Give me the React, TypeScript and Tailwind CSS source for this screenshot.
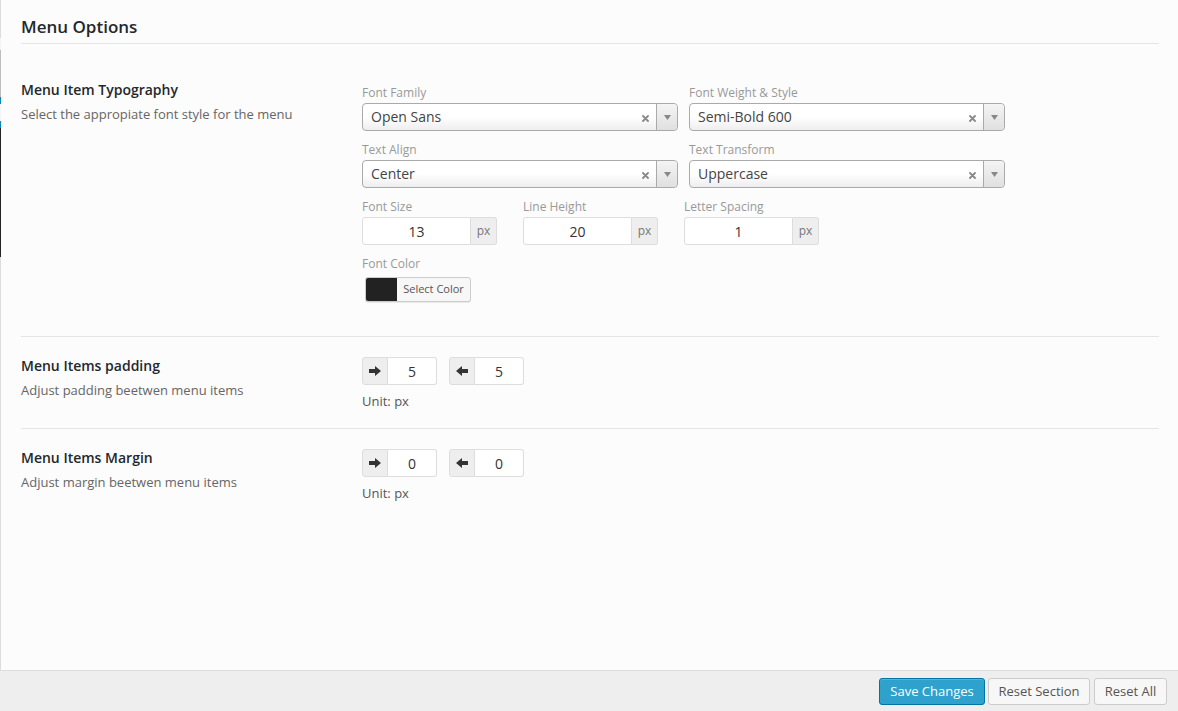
import React from "react";

const strip = [
  { h: 38, c: "bg-[#dcdcdc]" },
  { h: 12, c: "bg-[#f4f4f4]" },
  { h: 47, c: "bg-[#bdbdbd]" },
  { h: 7, c: "bg-[#0b86b8]" },
  { h: 17, c: "bg-[#f4f4f4]" },
  { h: 7, c: "bg-[#0b86b8]" },
  { h: 129, c: "bg-[#222222]" },
];

const SelectBox = ({ value }: { value: string }) => (
  <div className="flex h-[28px] w-[316px] items-center rounded-[4px] border border-[#aaaaaa] bg-gradient-to-b from-white from-50% to-[#eeeeee] text-[14px] text-[#444]">
    <span className="flex-1 pl-[8px] leading-[26px]">{value}</span>
    <svg width="7" height="7" viewBox="0 0 7 7" className="mr-[7px] mt-[2px]">
      <path d="M1 1l5 5M6 1L1 6" stroke="#888" strokeWidth="1.8" strokeLinecap="round" />
    </svg>
    <span className="flex h-full w-[21px] items-center justify-center rounded-r-[4px] border-l border-[#aaaaaa] bg-gradient-to-b from-[#f4f4f4] to-[#e0e0e0]">
      <svg width="7" height="5" viewBox="0 0 7 5">
        <path d="M0 0h7L3.5 5z" fill="#888" />
      </svg>
    </span>
  </div>
);

const NumberInput = ({ value }: { value: string }) => (
  <div className="flex h-[28px] w-[135px]">
    <div className="flex w-[109px] items-center justify-center rounded-l-[3px] border border-[#dddddd] bg-white text-[14px] text-[#333]">
      {value}
    </div>
    <div className="flex w-[26px] items-center justify-center rounded-r-[3px] border border-l-0 border-[#dddddd] bg-[#eeeeee] text-[12px] text-[#777]">
      px
    </div>
  </div>
);

const Arrow = ({ dir }: { dir: "right" | "left" }) => (
  <svg width="12" height="10" viewBox="0 0 12 10" className={dir === "left" ? "-scale-x-100" : ""}>
    <path d="M0 3h6V0l6 5-6 5V7H0z" fill="#333" />
  </svg>
);

const SpacingInput = ({ dir, value }: { dir: "right" | "left"; value: string }) => (
  <div className="flex h-[28px] w-[75px]">
    <div className="flex w-[26px] items-center justify-center rounded-l-[3px] border border-[#dddddd] bg-[#eeeeee]">
      <Arrow dir={dir} />
    </div>
    <div className="flex w-[49px] items-center justify-center rounded-r-[3px] border border-l-0 border-[#dddddd] bg-white text-[14px] text-[#333]">
      {value}
    </div>
  </div>
);

const Label = ({ children }: { children: React.ReactNode }) => (
  <div className="text-[12px] leading-[18px] text-[#999]">{children}</div>
);

const SectionInfo = ({ title, desc }: { title: string; desc: string }) => (
  <div className="w-[341px] shrink-0">
    <div className="text-[14px] font-semibold leading-[20px] text-[#23282d]">{title}</div>
    <div className="mt-[4px] text-[13px] leading-[20px] text-[#666]">{desc}</div>
  </div>
);

const App = () => {
  return (
    <div className="flex h-[711px] w-[1178px] flex-col overflow-hidden bg-[#eeeeee] font-['Open_Sans',sans-serif]">
      <div className="flex h-[671px] border-b border-[#dddddd] bg-[#fcfcfc]">
        <div className="flex w-px flex-col bg-[#dddddd]">
          {strip.map((s, i) => (
            <div key={i} className={s.c} style={{ height: s.h }} />
          ))}
        </div>
        <div className="flex-1 px-[20px] pr-[19px]">
          <div className="border-b border-[#e5e5e5] pb-[6px] pt-[16px] text-[17px] font-semibold leading-[21px] text-[#23282d]">
            Menu Options
          </div>

          {/* typography */}
          <div className="flex border-b border-[#e5e5e5] pb-[34px] pt-[36px]">
            <SectionInfo title="Menu Item Typography" desc="Select the appropiate font style for the menu" />
            <div className="pt-[4px]">
              <div className="flex gap-[11px]">
                <div>
                  <Label>Font Family</Label>
                  <div className="mt-[1px]">
                    <SelectBox value="Open Sans" />
                  </div>
                </div>
                <div>
                  <Label>Font Weight &amp; Style</Label>
                  <div className="mt-[1px]">
                    <SelectBox value="Semi-Bold 600" />
                  </div>
                </div>
              </div>
              <div className="mt-[10px] flex gap-[11px]">
                <div>
                  <Label>Text Align</Label>
                  <div className="mt-[1px]">
                    <SelectBox value="Center" />
                  </div>
                </div>
                <div>
                  <Label>Text Transform</Label>
                  <div className="mt-[1px]">
                    <SelectBox value="Uppercase" />
                  </div>
                </div>
              </div>
              <div className="mt-[10px] flex">
                <div>
                  <Label>Font Size</Label>
                  <div className="mt-[1px]">
                    <NumberInput value="13" />
                  </div>
                </div>
                <div className="ml-[26px]">
                  <Label>Line Height</Label>
                  <div className="mt-[1px]">
                    <NumberInput value="20" />
                  </div>
                </div>
                <div className="ml-[26px]">
                  <Label>Letter Spacing</Label>
                  <div className="mt-[1px]">
                    <NumberInput value="1" />
                  </div>
                </div>
              </div>
              <div className="mt-[10px]">
                <Label>Font Color</Label>
                <div className="ml-[3px] mt-[4px] flex h-[25px] w-[106px] overflow-hidden rounded-[3px] border border-[#cccccc] bg-[#f7f7f7] shadow-[0_1px_0_rgba(0,0,0,0.08)]">
                  <div className="w-[31px] bg-[#222222]" />
                  <div className="flex flex-1 items-center justify-center text-[11px] text-[#555]">Select Color</div>
                </div>
              </div>
            </div>
          </div>

          {/* padding */}
          <div className="flex border-b border-[#e5e5e5] pb-[18px] pt-[19px]">
            <SectionInfo title="Menu Items padding" desc="Adjust padding beetwen menu items" />
            <div className="pt-[1px]">
              <div className="flex gap-[12px]">
                <SpacingInput dir="right" value="5" />
                <SpacingInput dir="left" value="5" />
              </div>
              <div className="mt-[7px] text-[13px] leading-[18px] text-[#555]">Unit: px</div>
            </div>
          </div>

          {/* margin */}
          <div className="flex pt-[19px]">
            <SectionInfo title="Menu Items Margin" desc="Adjust margin beetwen menu items" />
            <div className="pt-[1px]">
              <div className="flex gap-[12px]">
                <SpacingInput dir="right" value="0" />
                <SpacingInput dir="left" value="0" />
              </div>
              <div className="mt-[7px] text-[13px] leading-[18px] text-[#555]">Unit: px</div>
            </div>
          </div>
        </div>
      </div>

      <div className="flex flex-1 items-start justify-end pr-[11px] pt-[7px]">
        <button className="h-[27px] w-[106px] rounded-[3px] border border-[#0074a2] bg-[#2ea2cc] text-[13px] text-white shadow-[inset_0_1px_0_rgba(120,200,230,0.5)]">
          Save Changes
        </button>
        <button className="ml-[3px] h-[27px] w-[102px] rounded-[3px] border border-[#cccccc] bg-[#f7f7f7] text-[13px] text-[#555]">
          Reset Section
        </button>
        <button className="ml-[4px] h-[27px] w-[73px] rounded-[3px] border border-[#cccccc] bg-[#f7f7f7] text-[13px] text-[#555]">
          Reset All
        </button>
      </div>
    </div>
  );
};

export default App;
